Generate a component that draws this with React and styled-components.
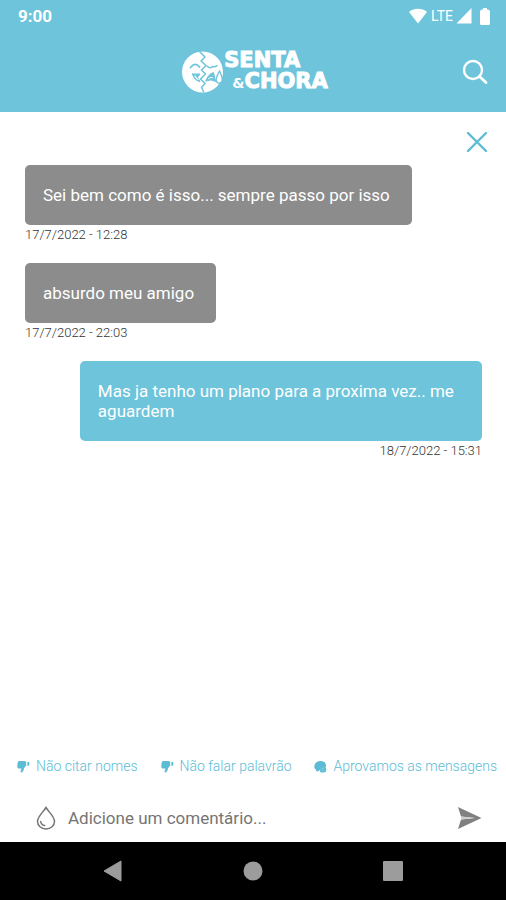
import React from "react";
import styled, { createGlobalStyle } from "styled-components";

const blue = "#6ec4db";

const messages = [
  {
    text: "Sei bem como é isso... sempre passo por isso",
    date: "17/7/2022 - 12:28",
  },
  { text: "absurdo meu amigo", date: "17/7/2022 - 22:03" },
  {
    text: "Mas ja tenho um plano para a proxima vez.. me aguardem",
    date: "18/7/2022 - 15:31",
    own: true,
  },
];

const rules = [
  { text: "Não citar nomes", icon: "down" },
  { text: "Não falar palavrão", icon: "down" },
  { text: "Aprovamos as mensagens", icon: "approve" },
];

function RuleIcon({ type }) {
  if (type === "approve") {
    return (
      <svg width="13" height="13" viewBox="0 0 13 13" fill="#5dbcd5">
        <path d="M6 1C9 .6 12 2.600 12 5.200c0 1-.1 1.600-.4 2.200.6.900.8 2.400.5 3.600-.3.900-1 1.400-2 1.400H7.200c-.8 0-1.300-.5-1.200-1.200L6.300 9.800 4.400 11.300C2.800 11.800 1.700 11 2 9.500.3 8.600 0 6.800.6 5 1.300 2.600 3.300 1.200 6 1z" />
        <path d="M7 9.200 8.400 8.300h2M8.400 10.600h2" stroke="#b9e2ed" strokeWidth=".5" fill="none" />
      </svg>
    );
  }

  return (
    <svg width="13" height="13" viewBox="0 0 13 13" fill="#5dbcd5">
      <path d="M2 1h5.500c.8 0 1.400.3 1.700.9v4c-1.500.7-2 1.900-2.500 3.600-.4 1.600-1.100 2.900-2.200 3-.9 0-1-1-.7-2l.6-2H2.200C.9 8.500.2 7.700.5 6.700.1 6 .1 5.200.6 4.600.3 3.800.5 3 1 2.600 1 1.700 1.300 1 2 1z" />
      <path d="M10.300 2h2v3.600h-2z" />
    </svg>
  );
}

function App() {
  return (
    <Screen>
      <GlobalResets />
      <Header>
        <StatusBar>
          <Clock>9:00</Clock>
          <StatusIcons>
            <svg width="20" height="16" viewBox="0 0 20 16" fill="#fff">
              <path d="M1 4C6-.3 14-.3 19 4l-9 11.500z" />
            </svg>
            <span>LTE</span>
            <svg width="16" height="16" viewBox="0 0 16 16" fill="#fff">
              <path d="M15.500 0v15.500H.5z" />
            </svg>
            <Battery width="10" height="17" viewBox="0 0 10 17" fill="#fff">
              <path d="M3 0h4v1.500h1Q10 2 10 3.500v12q0 1.500-1.500 1.500h-7Q0 17 0 15.500v-12Q0 2 2 1.500H3z" />
            </Battery>
          </StatusIcons>
        </StatusBar>

        <TopBar>
          <Logo>
            <svg width="42" height="42" viewBox="0 0 42 42" fill="none">
              <circle cx="20.500" cy="21" r="20.500" fill="#fff" />
              <g stroke={blue} strokeLinejoin="round" strokeLinecap="round">
                <path d="m18 1 5 5-4 4 5 4.500-4.500 4.500 4 4-5 5 4.500 4.500-3.500 4 2 4" strokeWidth="1.500" />
                <path d="M8.500 16.500q4.500-6 9-.5" strokeWidth="1.800" />
                <path d="M25 15q3 3 5.500.5 2.500 1 4.500-1" strokeWidth="1.400" />
                <path d="M10.500 23h7.500l-2.500 3.500 2.500 4q-6-1-7.500-7.500z" fill={blue} />
                <path d="M13 25q1.500 3 3 3.500" stroke="#fff" strokeWidth="1.200" />
                <path d="M24 30q1.500-6.500 7.500-8.500l2 9q-4.500-3-9.500-.5z" fill={blue} />
                <path d="M26.500 27.500q2-1.500 4-1" stroke="#fff" strokeWidth="1" />
              </g>
              <path d="M37.500 20q-4.500 8-3 10.500 2 3 5 .5 2-3-2-11z" fill="#fff" stroke={blue} strokeWidth="1.400" />
            </svg>
            <LogoText>
              <span>SENTA</span>
              <LogoLine>
                <small>&amp;</small>CHORA
              </LogoLine>
            </LogoText>
          </Logo>
          <IconButton aria-label="Buscar">
            <svg width="26" height="26" viewBox="0 0 26 26" fill="none" stroke="#fff" strokeWidth="2.400" strokeLinecap="round">
              <circle cx="11" cy="11" r="9" />
              <path d="m17.500 17.500 6.500 6" strokeWidth="2.800" />
            </svg>
          </IconButton>
        </TopBar>
      </Header>

      <CloseRow>
        <IconButton aria-label="Fechar">
          <svg width="22" height="22" viewBox="0 0 22 22" fill="none" stroke="#5dbcd5" strokeWidth="2.400" strokeLinecap="round">
            <path d="m2 2 18 18M20 2 2 20" />
          </svg>
        </IconButton>
      </CloseRow>

      <Messages>
        {messages.map((message) => (
          <Message key={message.date} $own={message.own}>
            <Bubble $own={message.own}>{message.text}</Bubble>
            <time>{message.date}</time>
          </Message>
        ))}
      </Messages>

      <Rules>
        {rules.map((rule) => (
          <li key={rule.text}>
            <RuleIcon type={rule.icon} />
            {rule.text}
          </li>
        ))}
      </Rules>

      <CommentForm onSubmit={(e) => e.preventDefault()}>
        <svg width="20" height="24" viewBox="0 0 20 24" fill="none" stroke="#757575" strokeWidth="1.500" strokeLinecap="round">
          <path d="M10 1.500C7 6.500 1.500 10.500 1.500 15.500a8.500 7.500 0 0 0 17 0C18.500 10.500 13 6.500 10 1.500z" />
          <path d="M4.700 15.500q.5 3.500 4 4" />
        </svg>
        <input type="text" aria-label="Comentário" placeholder="Adicione um comentário..." />
        <IconButton type="submit" aria-label="Enviar">
          <svg width="25" height="24" viewBox="0 0 25 24" fill="#808080">
            <path d="M1 1 24.500 12 1 23l3-9.500L18 12 4 10.500z" />
            <path d="M4 10.500 18 12 4 13.500z" fill="#ccc" />
          </svg>
        </IconButton>
      </CommentForm>

      <NavBar>
        <IconButton aria-label="Voltar">
          <svg width="20" height="22" viewBox="0 0 20 22" fill="#9c9c9c">
            <path d="M18 1v20L1 11z" stroke="#9c9c9c" strokeLinejoin="round" />
          </svg>
        </IconButton>
        <IconButton aria-label="Início">
          <svg width="20" height="20" viewBox="0 0 20 20" fill="#9c9c9c">
            <circle cx="10" cy="10" r="9.500" />
          </svg>
        </IconButton>
        <IconButton aria-label="Recentes">
          <svg width="20" height="20" viewBox="0 0 20 20" fill="#9c9c9c">
            <rect width="20" height="20" rx="1" />
          </svg>
        </IconButton>
      </NavBar>
    </Screen>
  );
}

const GlobalResets = createGlobalStyle`
* {
    box-sizing: border-box;
    margin: 0;
    padding: 0;
    font-family: Roboto, sans-serif;
}`;

const Screen = styled.div`
  min-height: 100vh;
  display: flex;
  flex-direction: column;
  background-color: white;
`;

const Header = styled.header`
  background-color: ${blue};
  color: white;
`;

const StatusBar = styled.div`
  height: 32px;
  padding: 0 16px 0 18px;
  display: flex;
  justify-content: space-between;
  align-items: center;
`;

const Clock = styled.span`
  font-size: 17px;
  font-weight: 700;
`;

const StatusIcons = styled.div`
  display: flex;
  align-items: center;
  gap: 3px;
  font-size: 14px;
`;

const Battery = styled.svg`
  margin-left: 5px;
`;

const TopBar = styled.div`
  height: 80px;
  padding: 0 18px;
  display: grid;
  grid-template-columns: 1fr auto 1fr;
  align-items: center;

  & > button {
    justify-self: end;
  }
`;

const Logo = styled.div`
  grid-column: 2;
  display: flex;
  align-items: center;
  padding-left: 4px;
`;

const LogoText = styled.h1`
  display: flex;
  flex-direction: column;
  font-size: 21px;
  line-height: 21px;

  & * {
    font-family: "DejaVu Sans", sans-serif;
    font-weight: 700;
    -webkit-text-stroke: 1px white;
    stroke-linejoin: round;
  }
`;

const LogoLine = styled.span`
  padding-left: 8px;

  & > small {
    font-size: 14px;
    -webkit-text-stroke: 0;
  }
`;

const IconButton = styled.button`
  display: flex;
  border: none;
  background: none;
  cursor: pointer;
`;

const CloseRow = styled.div`
  display: flex;
  justify-content: flex-end;
  padding: 19px 18px 12px;
`;

const Messages = styled.main`
  flex: 1;
  display: flex;
  flex-direction: column;
  gap: 18px;
  padding: 0 24px 0 25px;
`;

const Message = styled.article`
  display: flex;
  flex-direction: column;
  align-items: ${(props) => (props.$own ? "flex-end" : "flex-start")};

  & > time {
    font-size: 13px;
    line-height: 20px;
    font-weight: 300;
    color: #333;
  }
`;

const Bubble = styled.p`
  max-width: 88%;
  padding: 20px 22px 20px 18px;
  border-radius: 5px;
  background-color: ${(props) => (props.$own ? blue : "#8c8c8c")};
  color: white;
  font-size: 17px;
  line-height: 20px;
`;

const Rules = styled.ul`
  display: flex;
  justify-content: space-between;
  padding: 0 9px 0 17px;
  list-style: none;

  & > li {
    display: flex;
    align-items: center;
    gap: 6px;
    font-size: 14px;
    line-height: 20px;
    font-weight: 300;
    color: #5dbcd5;
  }
`;

const CommentForm = styled.form`
  display: flex;
  align-items: center;
  gap: 12px;
  padding: 30px 24px 12px 36px;

  & > input {
    flex: 1;
    min-width: 0;
    border: none;
    outline: none;
    background: none;
    font-size: 17px;
  }

  & > input::placeholder {
    color: #757575;
  }
`;

const NavBar = styled.nav`
  height: 58px;
  padding: 0 43px;
  display: flex;
  align-items: center;
  justify-content: space-around;
  background-color: black;
`;

export default App;
